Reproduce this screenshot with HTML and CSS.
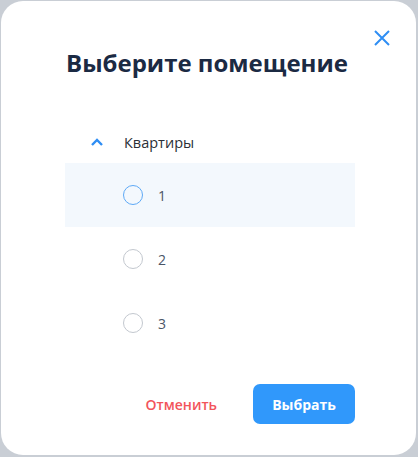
FILE: index.html
```html
<!DOCTYPE html>
<html lang="ru">
<head>
  <meta charset="UTF-8" />
  <meta name="viewport" content="width=device-width, initial-scale=1.0"/>
  <title>Выберите помещение</title>
  <link rel="stylesheet" href="styles.css">
</head>
<body>
  <div class="modal">
    <button class="close-btn" aria-label="Закрыть">
      <svg width="18" height="18" viewBox="0 0 18 18">
        <path d="M2 2 L16 16 M16 2 L2 16" stroke="#2f8ef4" stroke-width="2" fill="none"/>
      </svg>
    </button>

    <h1 class="title">Выберите помещение</h1>

    <div class="group">
      <div class="group-head">
        <svg class="chevron" width="14" height="10" viewBox="0 0 14 10">
          <polyline points="2,8 7,3 12,8" stroke="#2f8ef4" stroke-width="2.4" fill="none"/>
        </svg>
        <span>Квартиры</span>
      </div>
      <!-- список помещений -->
      <label class="option active"><span class="radio"></span><span class="option-text">1</span></label>
      <label class="option"><span class="radio"></span><span class="option-text">2</span></label>
      <label class="option"><span class="radio"></span><span class="option-text">3</span></label>
    </div>

    <div class="footer">
      <button class="btn-cancel">Отменить</button>
      <button class="btn-ok">Выбрать</button>
    </div>
  </div>
</body>
</html>
```

FILE: styles.css
```css
body {
  margin: 0;
  padding: 1px 2px 2px 1px;
  background: #c9ced5;
  font-family: "Open Sans", "Noto Sans", sans-serif;
}
.modal {
  position: relative;
  box-sizing: border-box;
  width: 415px;
  height: 454px;
  background: #fff;
  border-radius: 22px;
  padding: 46px 61px 0 64px;
}
.close-btn {
  position: absolute;
  top: 28px;
  right: 25px;
  background: none;
  border: none;
  padding: 0;
  width: 18px;
  height: 18px;
  cursor: pointer;
}
.close-btn svg {
  display: block;
}
.title {
  margin: 0;
  font-size: 24px;
  line-height: 32px;
  font-weight: 700;
  color: #1b2a43;
  text-align: center;
  padding-right: 6px;
}
.group {
  margin-top: 42px;
}
.group-head {
  display: flex;
  align-items: center;
  height: 42px;
  padding-left: 25px;
  font-size: 14.5px;
  color: #2b2f36;
}
.chevron {
  display: block;
  margin-right: 20px;
}
.option {
  display: flex;
  align-items: center;
  height: 64px;
  padding-left: 58px;
  font-size: 14px;
  color: #4a5566;
  cursor: pointer;
}
.option.active {
  background: #f3f8fd;
}
.radio {
  box-sizing: border-box;
  width: 20px;
  height: 20px;
  border: 1px solid #c3c8cf;
  border-radius: 50%;
  margin-right: 15px;
}
.option.active .radio {
  border-color: #5ea9f6;
}
.footer {
  display: flex;
  justify-content: flex-end;
  align-items: center;
  margin-top: 29px;
}
.btn-cancel {
  background: none;
  border: none;
  padding: 0 36px 0 0;
  font-family: inherit;
  font-size: 14px;
  font-weight: 600;
  color: #f2545b;
  cursor: pointer;
}
.btn-ok {
  width: 102px;
  height: 40px;
  border: none;
  border-radius: 7px;
  background: #3098fb;
  color: #fff;
  font-family: inherit;
  font-size: 14px;
  font-weight: 700;
  cursor: pointer;
}
```
